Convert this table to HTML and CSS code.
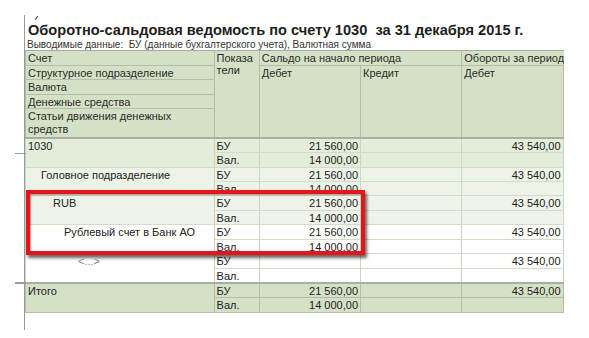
FILE: index.html
```html
<!DOCTYPE html>
<html lang="ru">
<head>
<meta charset="utf-8">
<link rel="stylesheet" href="styles.css">
</head>
<body>
<div class="page">
  <span class="mark"></span>
  <h1 class="title">Оборотно-сальдовая ведомость по счету 1030&nbsp; за 31 декабря 2015 г.</h1>
  <div class="subtitle">Выводимые данные:&nbsp; БУ (данные бухгалтерского учета), Валютная сумма</div>
  <div class="report">
    <table class="grid">
      <colgroup>
        <col class="c-name"><col class="c-ind"><col class="c-num"><col class="c-num"><col class="c-num"><col class="c-num">
      </colgroup>
      <thead>
        <tr class="h1">
          <th class="hl">Счет</th>
          <th class="hl" rowspan="5">Показа<br>тели</th>
          <th class="hl" colspan="2">Сальдо на начало периода</th>
          <th class="hl" colspan="2">Обороты за период</th>
        </tr>
        <tr class="h1">
          <th class="hl">Структурное подразделение</th>
          <th class="hl" rowspan="4">Дебет</th>
          <th class="hl" rowspan="4">Кредит</th>
          <th class="hl" rowspan="4">Дебет</th>
          <th class="hl yellow" rowspan="4"></th>
        </tr>
        <tr class="h1"><th class="hl">Валюта</th></tr>
        <tr class="h1"><th class="hl">Денежные средства</th></tr>
        <tr class="h2"><th class="hl">Статьи движения денежных средств</th></tr>
      </thead>
      <tbody>
        <tr class="r lvl0 first">
          <td class="name group g-mid" rowspan="2">1030</td><td>БУ</td><td class="n">21 560,00</td><td class="n"></td><td class="n">43 540,00</td><td class="n"></td>
        </tr>
        <tr class="r lvl0"><td>Вал.</td><td class="n">14 000,00</td><td class="n"></td><td class="n"></td><td class="n"></td></tr>
        <tr class="r lvl1">
          <td class="name i1" rowspan="2">Головное подразделение</td><td>БУ</td><td class="n">21 560,00</td><td class="n"></td><td class="n">43 540,00</td><td class="n"></td>
        </tr>
        <tr class="r lvl1"><td>Вал.</td><td class="n">14 000,00</td><td class="n"></td><td class="n"></td><td class="n"></td></tr>
        <tr class="r lvl2">
          <td class="name i2" rowspan="2">RUB</td><td>БУ</td><td class="n">21 560,00</td><td class="n"></td><td class="n">43 540,00</td><td class="n"></td>
        </tr>
        <tr class="r lvl2"><td>Вал.</td><td class="n">14 000,00</td><td class="n"></td><td class="n"></td><td class="n"></td></tr>
        <tr class="r lvl3">
          <td class="name i3" rowspan="2">Рублевый счет в Банк АО</td><td>БУ</td><td class="n">21 560,00</td><td class="n"></td><td class="n">43 540,00</td><td class="n"></td>
        </tr>
        <tr class="r lvl3"><td>Вал.</td><td class="n">14 000,00</td><td class="n"></td><td class="n"></td><td class="n"></td></tr>
        <tr class="r lvl3">
          <td class="name i4 dim" rowspan="2">&lt;...&gt;</td><td>БУ</td><td class="n"></td><td class="n"></td><td class="n">43 540,00</td><td class="n"></td>
        </tr>
        <tr class="r lvl3"><td>Вал.</td><td class="n"></td><td class="n"></td><td class="n"></td><td class="n"></td></tr>
        <tr class="r total first-total">
          <td class="name group g-top" rowspan="2">Итого</td><td>БУ</td><td class="n">21 560,00</td><td class="n"></td><td class="n">43 540,00</td><td class="n"></td>
        </tr>
        <tr class="r total"><td>Вал.</td><td class="n">14 000,00</td><td class="n"></td><td class="n"></td><td class="n"></td></tr>
      </tbody>
    </table>
    <div class="highlight"></div>
  </div>
</div>
</body>
</html>
```

FILE: styles.css
```css
html, body {
  margin: 0;
  padding: 0;
  background: #ffffff;
}

body {
  width: 589px;
  height: 338px;
  overflow: hidden;
  font-family: "Liberation Sans", Arial, sans-serif;
  color: #222;
}

.page {
  position: relative;
  margin: 15px 0 0 24px;
  height: 315px;
  border-left: 1px solid #9a9a9a;
  box-sizing: border-box;
}

.mark {
  position: absolute;
  left: 11px;
  top: 1px;
  width: 1px;
  height: 4px;
  background: #333;
  transform: skewX(-30deg);
}

.title {
  margin: 0;
  padding: 7px 0 0 3px;
  font-size: 14.6px;
  line-height: 16px;
  font-weight: bold;
  color: #1e1e1e;
  white-space: nowrap;
}

.subtitle {
  padding: 1px 0 0 2px;
  font-size: 10px;
  line-height: 11px;
  color: #333;
  white-space: nowrap;
}

.report {
  position: relative;
  width: 550px;
  margin-left: -11px;
  padding-left: 11px;
  box-sizing: border-box;
  overflow: hidden;
}

.grid {
  border-collapse: collapse;
  table-layout: fixed;
  width: 640px;
  font-size: 11px;
  line-height: 12.3px;
}

.c-name { width: 188px; }
.c-ind { width: 45px; }
.c-num { width: 101px; }

.grid th,
.grid td {
  padding: 1px 2px 0 2px;
  vertical-align: top;
  text-align: left;
  font-weight: normal;
  white-space: nowrap;
  overflow: hidden;
}

.grid th {
  background: #d5e1c6;
  color: #2a2a2a;
  border: 1px solid #b3bdaa;
}

.grid thead tr:first-child th { border-top: 1px solid #a9a9a9; }

.h1 { height: 14.6px; }
.h2 { height: 29px; }
.h2 th { white-space: normal; line-height: 13px; }

.yellow::after {
  content: "";
  display: block;
  width: 2px;
  height: 7px;
  margin-top: 2px;
  background: #ecd98a;
}

.grid td {
  border-left: 1px solid #c9d6c3;
  border-right: 1px solid #c9d6c3;
  border-top: 1px solid #d2dccb;
  border-bottom: 1px solid #d2dccb;
}

.r { height: 14.45px; }

.first td { border-top: 2px solid #a8aea2; }

.n { text-align: right !important; }

.lvl0 td { background: #e3edd9; }
.lvl1 td { background: #edf3e7; }
.lvl2 td { background: #eff3ea; }
.lvl3 td { background: #ffffff; }

.total td {
  background: #d5e1c6;
  border-left-color: #b3bdaa;
  border-right-color: #b3bdaa;
  border-bottom-color: #b3bdaa;
}
.first-total td { border-top: 2px solid #a8aea2; }

.name { position: relative; overflow: visible !important; }
.i1 { padding-left: 15px !important; }
.i2 { padding-left: 27px !important; }
.i3 { padding-left: 38px !important; }
.i4 { padding-left: 52px !important; }
.dim { color: #8a8a8a; }

.group::before {
  content: "";
  position: absolute;
  left: -11px;
  width: 11px;
  height: 1px;
  background: #9a9a9a;
}
.g-mid::before { top: 14px; }
.g-top::before { top: -2px; height: 2px; }

.highlight {
  position: absolute;
  left: 12px;
  top: 140px;
  width: 331px;
  height: 57px;
  border: 4px solid #e8141a;
  box-shadow: 2px 3px 3px rgba(0, 0, 0, 0.6), inset 1px 1px 2px rgba(0, 0, 0, 0.4);
  pointer-events: none;
}
```
